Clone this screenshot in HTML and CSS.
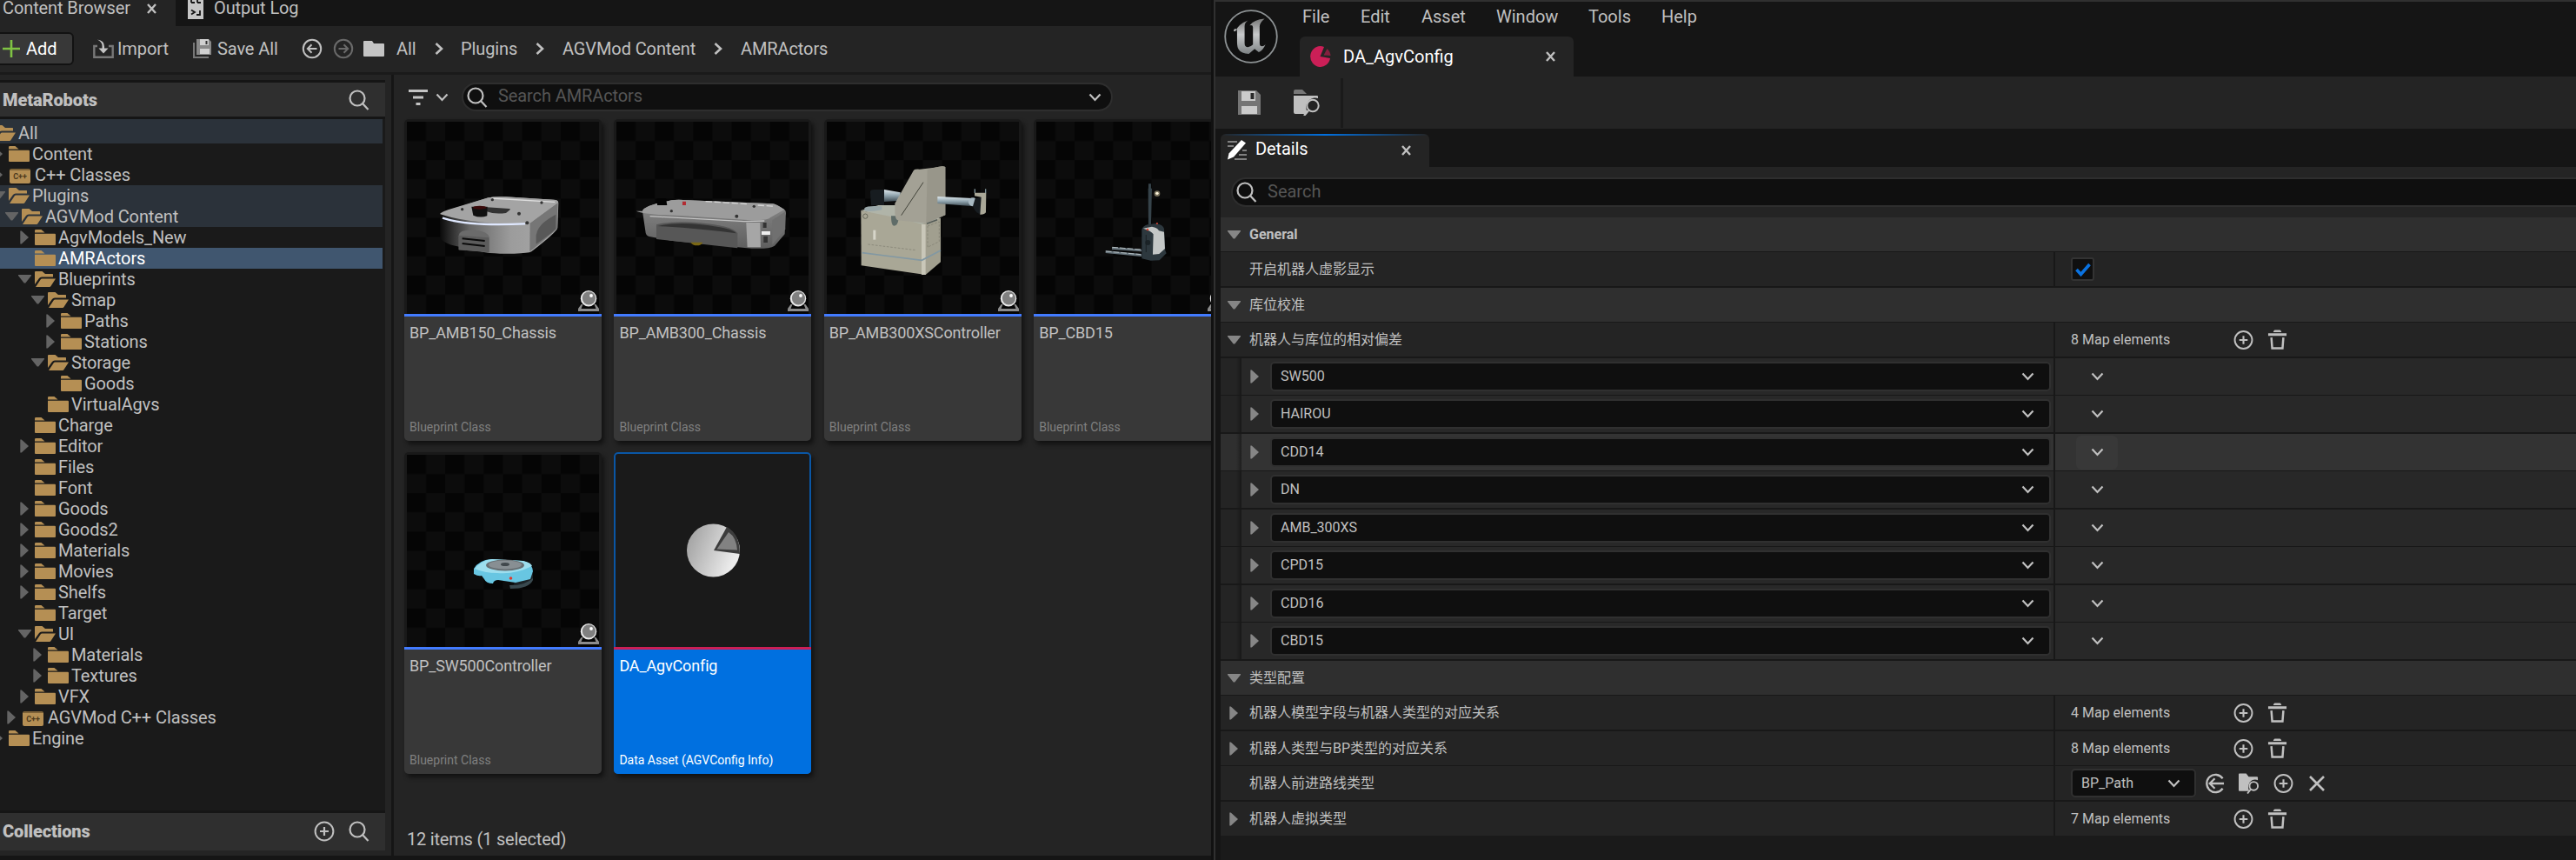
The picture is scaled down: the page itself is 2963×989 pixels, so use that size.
FILE: index.html
```html
<!DOCTYPE html>
<html lang="zh-CN">
<head>
<meta charset="utf-8">
<title>DA_AgvConfig</title>
<link rel="stylesheet" href="styles.css">
</head>
<body>
<svg class="defs" aria-hidden="true">
  <defs>
    <linearGradient id="metal" x1="0" y1="0" x2="0" y2="1"><stop offset="0" stop-color="#777"/><stop offset=".45" stop-color="#c8cacb"/><stop offset="1" stop-color="#7d8284"/></linearGradient>
    <linearGradient id="pieg" x1="0" y1="0" x2="1" y2=".4"><stop offset="0" stop-color="#9a9a9a"/><stop offset="1" stop-color="#ececec"/></linearGradient>
    <linearGradient id="r1" x1="0" y1="0" x2="1" y2="0"><stop offset="0" stop-color="#0a0a0a"/><stop offset=".25" stop-color="#666"/><stop offset=".6" stop-color="#9c9c9c"/><stop offset="1" stop-color="#a8a8a8"/></linearGradient>
    <linearGradient id="r2" x1="0" y1="0" x2="0" y2="1"><stop offset="0" stop-color="#8a8a8a"/><stop offset="1" stop-color="#5e5e5e"/></linearGradient>
    <linearGradient id="arm" x1="0" y1="0" x2="0" y2="1"><stop offset="0" stop-color="#dfe9ee"/><stop offset=".5" stop-color="#8fa3ad"/><stop offset="1" stop-color="#3d4a52"/></linearGradient>
    <pattern id="chk" width="44.2" height="44.2" patternUnits="userSpaceOnUse"><rect width="44.2" height="44.2" fill="#050505"/><path d="M22.1 0h22.1v22.1H22.1zM0 22.1h22.1v22.1H0z" fill="#0c0c0c"/></pattern>
  </defs>
  <symbol id="folder" viewBox="0 0 24 18"><path d="M0 3V1.200Q0 0 1.200 0H7.500L11.500 3.600H0z" fill="#b58f54"/><path d="M0 4.700H23Q24 4.700 24 5.700V17Q24 18 23 18H1Q0 18 0 17z" fill="#b58f54"/></symbol>
  <symbol id="open" viewBox="0 0 24 18"><path d="M0 15V1Q0 0 1 0H8.500L12 3H20.500Q21 3 21 4V6.500H8Q6 6.500 5 8z" fill="#b58f54"/><path d="M1 18L6.800 9.200Q7.300 8.500 8.200 8.500H24L18.500 17Q18 18 17 18z" fill="#b58f54"/></symbol>
  <symbol id="right" viewBox="0 0 15 16"><path d="M2.300.500h1.500L12 8 3.800 15.500H2.300z" fill="currentColor"/></symbol>
  <symbol id="down" viewBox="0 0 15 16"><path d="M0 3h15v1L8.300 12.500H6.700L0 4z" fill="currentColor"/></symbol>
  <symbol id="search" viewBox="0 0 24 24"><g fill="none" stroke="currentColor" stroke-width="2.200"><circle cx="10" cy="10" r="8.500"/><path d="M16 16L22.500 23"/></g></symbol>
  <symbol id="plus" viewBox="0 0 24 24"><g fill="none" stroke="currentColor" stroke-width="2"><circle cx="12" cy="12" r="10.400"/><path d="M12 7v10M7 12h10" stroke-width="2.200"/></g></symbol>
  <symbol id="trash" viewBox="0 0 24 24"><path d="M8 0.500Q8 0 9 0h6q1 0 1 .500L17 2.500H7zM1 4h22v3H1z" fill="currentColor"/><path d="M4.800 9l1 13h12.400l1-13" fill="none" stroke="currentColor" stroke-width="2.600"/></symbol>
  <symbol id="chev" viewBox="0 0 14 10"><path d="M1 1.500L7 8 13 1.500" fill="none" stroke="currentColor" stroke-width="2.200"/></symbol>
  <symbol id="crumb" viewBox="0 0 10 14"><path d="M1.500 1L8 7 1.500 13" fill="none" stroke="currentColor" stroke-width="2.600"/></symbol>
  <symbol id="close" viewBox="0 0 11 12"><path d="M1 1l9 10M10 1L1 11" fill="none" stroke="currentColor" stroke-width="2.400"/></symbol>
  <symbol id="back" viewBox="0 0 24 24"><g fill="none" stroke="currentColor" stroke-width="2"><circle cx="12" cy="12" r="10.200"/><path d="M17.500 12H7M11.500 7.200L6.800 12l4.700 4.800"/></g></symbol>
  <symbol id="browse" viewBox="0 0 30 30"><path d="M0 2q0-2 2-2h8l5 5H0z" fill="#777"/><path d="M0 7H27q1 0 1 1v2q-6-2-11 3-5 6-1 13l-2 2H2q-2 0-2-2z" fill="#c0c0c0"/><circle cx="22" cy="18.500" r="6.700" fill="none" stroke="#c0c0c0" stroke-width="2"/><path d="M17 24l-5 6" stroke="#c0c0c0" stroke-width="2.400"/></symbol>
  <symbol id="bp" viewBox="0 0 24 24"><path d="M3.500 16h2l-2 5h17l-2-5h2L24 21v3H0v-3z" fill="#8c8c8c"/><circle cx="12" cy="9.200" r="9.200" fill="#e8e8e8"/><circle cx="12.400" cy="8.800" r="7.600" fill="#808080"/><circle cx="15" cy="6" r="1.900" fill="#fff"/></symbol>
</svg>

<section class="browser">
  <div class="tabs">
    <div class="tab tab-on"><span>Content Browser</span><svg class="x"><use href="#close"/></svg></div>
    <div class="tab tab-log"><svg class="log" viewBox="0 0 18 22"><path d="M0 0h18v22H0z" fill="#c6c6c6"/><path d="M4 3h4M4 0v3M11 3h4M11 0v3M4 11.500l4 2.500-4 2.500M14 12v5h-4" fill="none" stroke="#151515" stroke-width="1.800"/></svg><span>Output Log</span></div>
  </div>
  <div class="bar">
    <div class="add"><svg viewBox="0 0 20 20"><path d="M10 0v20M0 10h20" stroke="#7fc343" stroke-width="2.600"/></svg><span>Add</span></div>
    <svg class="i-imp" viewBox="0 0 24 22"><path d="M5 8H1.300v12.700h21.400V8H18" fill="none" stroke="#777" stroke-width="2.400"/><path d="M5 .5q8 1 8 8v2h4.500L12 16.500 6.500 10.500H10.500V8Q10.500 3 5 .5z" fill="#c4c4c4"/></svg><span class="w-imp">Import</span>
    <svg class="i-sav" viewBox="0 0 22 22"><path d="M1 4v17h17" fill="none" stroke="#777" stroke-width="2.200"/><path d="M4 0h14l3 3v15H4z" fill="#888"/><path d="M8 0h10v7H8zM8 11h11v6H8z" fill="#d0d0d0"/><path d="M14.500 2h2v4h-2z" fill="#333"/></svg><span class="w-sav">Save All</span>
    <svg class="i-bk"><use href="#back"/></svg>
    <svg class="i-fw"><use href="#back"/></svg>
    <svg class="i-fd" viewBox="0 0 24 18"><path d="M0 1q0-1 1-1h9l2 3h11q1 0 1 1v13q0 1-1 1H1q-1 0-1-1z" fill="#c4c4c4"/></svg>
    <span class="w-all">All</span><svg class="cr"><use href="#crumb"/></svg>
    <span class="w-plg">Plugins</span><svg class="cr"><use href="#crumb"/></svg>
    <span class="w-mod">AGVMod Content</span><svg class="cr"><use href="#crumb"/></svg>
    <span class="w-amr">AMRActors</span>
  </div>
  <div class="body">
    <aside class="side">
      <div class="hd"><b>MetaRobots</b><svg class="s22"><use href="#search"/></svg></div>
      <div class="tree">
        <div class="n n-all hi"><svg class="tw"></svg><svg class="fi"><use href="#open"/></svg><span>All</span></div>
        <div class="n l0"><svg class="tw"><use href="#right"/></svg><svg class="fi"><use href="#folder"/></svg><span>Content</span></div>
        <div class="n l0"><svg class="tw"><use href="#right"/></svg><i class="cpp">C++</i><span>C++ Classes</span></div>
        <div class="n l0 hi"><svg class="tw"><use href="#down"/></svg><svg class="fi"><use href="#open"/></svg><span>Plugins</span></div>
        <div class="n l1 hi"><svg class="tw"><use href="#down"/></svg><svg class="fi"><use href="#open"/></svg><span>AGVMod Content</span></div>
        <div class="n l2"><svg class="tw"><use href="#right"/></svg><svg class="fi"><use href="#folder"/></svg><span>AgvModels_New</span></div>
        <div class="n l2 sel"><svg class="tw"></svg><svg class="fi"><use href="#folder"/></svg><span>AMRActors</span></div>
        <div class="n l2"><svg class="tw"><use href="#down"/></svg><svg class="fi"><use href="#open"/></svg><span>Blueprints</span></div>
        <div class="n l3"><svg class="tw"><use href="#down"/></svg><svg class="fi"><use href="#open"/></svg><span>Smap</span></div>
        <div class="n l4"><svg class="tw"><use href="#right"/></svg><svg class="fi"><use href="#folder"/></svg><span>Paths</span></div>
        <div class="n l4"><svg class="tw"><use href="#right"/></svg><svg class="fi"><use href="#folder"/></svg><span>Stations</span></div>
        <div class="n l3"><svg class="tw"><use href="#down"/></svg><svg class="fi"><use href="#open"/></svg><span>Storage</span></div>
        <div class="n l4"><svg class="tw"></svg><svg class="fi"><use href="#folder"/></svg><span>Goods</span></div>
        <div class="n l3"><svg class="tw"></svg><svg class="fi"><use href="#folder"/></svg><span>VirtualAgvs</span></div>
        <div class="n l2"><svg class="tw"></svg><svg class="fi"><use href="#folder"/></svg><span>Charge</span></div>
        <div class="n l2"><svg class="tw"><use href="#right"/></svg><svg class="fi"><use href="#folder"/></svg><span>Editor</span></div>
        <div class="n l2"><svg class="tw"></svg><svg class="fi"><use href="#folder"/></svg><span>Files</span></div>
        <div class="n l2"><svg class="tw"></svg><svg class="fi"><use href="#folder"/></svg><span>Font</span></div>
        <div class="n l2"><svg class="tw"><use href="#right"/></svg><svg class="fi"><use href="#folder"/></svg><span>Goods</span></div>
        <div class="n l2"><svg class="tw"><use href="#right"/></svg><svg class="fi"><use href="#folder"/></svg><span>Goods2</span></div>
        <div class="n l2"><svg class="tw"><use href="#right"/></svg><svg class="fi"><use href="#folder"/></svg><span>Materials</span></div>
        <div class="n l2"><svg class="tw"><use href="#right"/></svg><svg class="fi"><use href="#folder"/></svg><span>Movies</span></div>
        <div class="n l2"><svg class="tw"><use href="#right"/></svg><svg class="fi"><use href="#folder"/></svg><span>Shelfs</span></div>
        <div class="n l2"><svg class="tw"></svg><svg class="fi"><use href="#folder"/></svg><span>Target</span></div>
        <div class="n l2"><svg class="tw"><use href="#down"/></svg><svg class="fi"><use href="#open"/></svg><span>UI</span></div>
        <div class="n l3"><svg class="tw"><use href="#right"/></svg><svg class="fi"><use href="#folder"/></svg><span>Materials</span></div>
        <div class="n l3"><svg class="tw"><use href="#right"/></svg><svg class="fi"><use href="#folder"/></svg><span>Textures</span></div>
        <div class="n l2"><svg class="tw"><use href="#right"/></svg><svg class="fi"><use href="#folder"/></svg><span>VFX</span></div>
        <div class="n l1"><svg class="tw"><use href="#right"/></svg><i class="cpp">C++</i><span>AGVMod C++ Classes</span></div>
        <div class="n l0"><svg class="tw"><use href="#right"/></svg><svg class="fi"><use href="#folder"/></svg><span>Engine</span></div>
      </div>
      <div class="hd hd-col"><b>Collections</b><svg class="s22 pl"><use href="#plus"/></svg><svg class="s22"><use href="#search"/></svg></div>
    </aside>
    <main class="main">
      <div class="find">
        <svg class="filt" viewBox="0 0 22 18"><path d="M0 1.500h22M5 9h12M8.500 16.500h5" stroke="#c4c4c4" stroke-width="3"/></svg>
        <svg class="chev"><use href="#chev"/></svg>
        <div class="box"><svg class="s22"><use href="#search"/></svg><span>Search AMRActors</span><svg class="chev"><use href="#chev"/></svg></div>
      </div>
      <div class="grid">
        <article class="card">
          <svg class="thumb" viewBox="0 0 221 221"><rect width="221" height="221" fill="url(#chk)"/>
            <g transform="translate(-3 60) scale(.3333)">
              <path d="M123 142q5-9 30-17L290 82q20-5 60-3l165 10q18 1 17 12l-3 85q-2 14-90 82-10 6-60 7-60 2-100-4l-110-24q-25-5-45-25z" fill="url(#r1)"/>
              <path d="M434 170L530 100l-2 88q-20 20-95 80z" fill="#767676"/>
              <path d="M455 212q5-40 68-72v50q-20 20-68 52z" fill="#585858"/>
              <path d="M123 138q5-7 30-15L290 82q20-5 60-3l165 10q18 1 15 8L440 165q-12 9-60 8-170-4-257-35z" fill="#a4a4a4"/>
              <path d="M300 84l220 13" stroke="#ddd" stroke-width="4"/>
              <path d="M132 152q90 30 285 20" fill="none" stroke="#dfe8ff" stroke-width="7"/>
              <path d="M285 115l78 5q6 0 0 5l-12 10q-40 5-66-5z" fill="#333"/>
              <path d="M232 113h55l-1 32q-25 8-48-2z" fill="#111"/><ellipse cx="260" cy="116" rx="24" ry="6" fill="#3a0a0a"/>
              <path d="M188 262v-50q2-20 50-18 55 2 56 30v47z" fill="#6b6b6b"/><path d="M188 262v-50l104 8v50z" fill="#5c5c5c"/>
              <path d="M200 223l78 8M200 240l78 9" stroke="#0b0b0b" stroke-width="6"/>
              <g fill="#333"><circle cx="304" cy="89" r="5"/><circle cx="474" cy="99" r="5"/><circle cx="200" cy="122" r="5"/><circle cx="396" cy="137" r="6"/><circle cx="424" cy="169" r="6"/></g>
            </g>
            <use href="#bp" x="197" y="194" width="24" height="24"/></svg>
          <div class="info"><span class="name">BP_AMB150_Chassis</span><span class="kind">Blueprint Class</span></div>
        </article>
        <article class="card">
          <svg class="thumb" viewBox="0 0 221 221"><rect width="221" height="221" fill="url(#chk)"/>
            <g transform="translate(-244 60) scale(.3333)">
              <path d="M822 128q5-15 60-28l40-9q20-4 60 0l290 12q10 1 40 20 7 5 4 20l-3 65-35 40q-20 12-80 9L920 230l-75-14q-12-2-13-20z" fill="url(#r2)"/>
              <path d="M822 128q5-15 60-28l40-9q20-4 60 0l290 12q10 1 40 20l-48 27q-10 12-80 9l-230-15q-120-3-154-16z" fill="#9c9c9c"/>
              <path d="M848 146l325 18 70-2" fill="none" stroke="#c4c4c4" stroke-width="4"/>
              <path d="M870 225v-50q60-15 150-6 110 10 130 35v52z" fill="#575757"/>
              <path d="M875 180q60-15 150-5 110 12 120 30-120-16-270-25z" fill="#343434"/>
              <path d="M1180 168h48l2 85h-46z" fill="#a6a6a6"/><path d="M1270 160l45-30v60l-45 55z" fill="#707070"/>
              <path d="M1233 198h30v12h-30z" fill="#eee"/><path d="M1238 168h12v18h-12zM1240 215h14v22h-14z" fill="#333"/>
              <path d="M988 236h42q-5 11-20 11t-22-11z" fill="#7a6714"/>
              <path d="M873 84h30l4 24h-34z" fill="#030303"/><path d="M960 95h12v13h-12z" fill="#b32b32"/>
              <path d="M1040 95l150 9M1220 108l60 4" stroke="#d5d5d5" stroke-width="4" stroke-dasharray="22 8"/>
              <g fill="#333"><circle cx="922" cy="128" r="5"/><circle cx="1147" cy="146" r="6"/><circle cx="1207" cy="112" r="5"/></g>
            </g>
            <use href="#bp" x="197" y="194" width="24" height="24"/></svg>
          <div class="info"><span class="name">BP_AMB300_Chassis</span><span class="kind">Blueprint Class</span></div>
        </article>
        <article class="card">
          <svg class="thumb" viewBox="0 0 221 221"><rect width="221" height="221" fill="url(#chk)"/>
            <g transform="translate(-6 30) scale(.3333)">
              <path d="M168 152q0-8 12-8h36v55h-45z" fill="#171c20"/><path d="M216 144l56 10v28l-56 4z" fill="url(#arm)"/>
              <path d="M136 216l60-18h60l155 45-65 30z" fill="#b0b4a8"/><path d="M148 208q10-10 60-6v12q-40 8-60 3z" fill="#9aa8aa"/>
              <path d="M136 216l120 25 90 22 13 175-222-32z" fill="#a9a796"/><path d="M345 264l66-22v152l-52 44h-14z" fill="#a19f8f"/>
              <path d="M345 264h14v174h-14z" fill="#c9c7b9"/>
              <path d="M140 362l206 26 65-34" fill="none" stroke="#8298a3" stroke-width="5"/>
              <path d="M240 235h26q0 34-16 34-10 0-10-34z" fill="#5f6c68"/>
              <path d="M318 77q4-4 20-3l52-6q30-8 37-2v166l-66 28-98-10q-8-2-10-24v-34z" fill="#a3a195"/>
              <path d="M365 76l25-8q30-8 37-2v166l-66 28z" fill="#98968a"/>
              <path d="M351 119l-76 114" stroke="#414239" stroke-width="3"/>
              <path d="M363 262l36-14" stroke="#555c58" stroke-width="5"/>
              <path d="M400 168l120 6 15 10-10 18-125-10z" fill="url(#arm)"/>
              <circle cx="522" cy="187" r="15" fill="#a9bac3"/><path d="M530 175l22-5-2 58q-18 0-28-26z" fill="#171c20"/>
              <path d="M528 155h40l-1 68q-5 8-20 7l4-60-23-4z" fill="#aaa898"/><path d="M529 142v14M566 142v14" stroke="#7f9298" stroke-width="4"/>
              <path d="M178 284h9v33h-9z" fill="#d6d5c9"/><circle cx="151" cy="236" r="8" fill="none" stroke="#666759" stroke-width="3"/><path d="M160 333l165 20M366 270l40-15v68l-40 20z" fill="none" stroke="#7d7c6e" stroke-width="2" stroke-dasharray="8 5"/>
            </g>
            <use href="#bp" x="197" y="194" width="24" height="24"/></svg>
          <div class="info"><span class="name">BP_AMB300XSController</span><span class="kind">Blueprint Class</span></div>
        </article>
        <article class="card">
          <svg class="thumb" viewBox="0 0 221 221"><rect width="221" height="221" fill="url(#chk)"/>
            <g transform="translate(-247 30) scale(.3333)">
              <path d="M1127 140h13l-3 125h-9zM1128 124h9v16h-9z" fill="#36434a"/><circle cx="1158" cy="158" r="10" fill="#77705c"/><circle cx="1158" cy="157" r="5" fill="#fff6dc"/>
              <path d="M1002 342l102 8v8l-102-7zM980 354l124 12v9l-124-12z" fill="#65727a"/>
              <path d="M1003 343l100 8M981 357l120 11" stroke="#b4bec2" stroke-width="3" stroke-dasharray="20 6"/>
              <path d="M1105 283q2-12 20-18l30-4q24 4 27 18l4 75 4 10-24 24-30 1-31-7z" fill="#2d383e"/>
              <path d="M1110 278l30-6q20 4 24 14l18 4 3 58-20 18-22 2 2-70q-8-12-35-20z" fill="#c4c7c6"/>
              <circle cx="1125" cy="282" r="4" fill="#dc4433"/><circle cx="1158" cy="261" r="3" fill="#dc4433"/><circle cx="1126" cy="327" r="9" fill="#1b2327"/><path d="M1120 300v60" stroke="#1a2226" stroke-width="3"/>
            </g>
            <use href="#bp" x="197" y="194" width="24" height="24"/></svg>
          <div class="info"><span class="name">BP_CBD15</span><span class="kind">Blueprint Class</span></div>
        </article>
        <article class="card">
          <svg class="thumb" viewBox="0 0 221 221"><rect width="221" height="221" fill="url(#chk)"/>
            <path d="M118 150q22 0 27-14v8q-4 10-26 10z" fill="#39494f"/><path d="M124 143l21-7v6q-8 7-22 8z" fill="#1c2428"/>
            <path d="M77 131q6-10 20-11l36 2q11 2 12 12l-3 9-17 4-20-3q-5 0-6 4-8 0-10-5l-3-4q-4 1-9-2z" fill="#68c6e2"/>
            <path d="M78 131q8-10 20-11l36 2q9 2 10 6-20 10-40 8-15 0-26-5z" fill="#9ddeee"/>
            <ellipse cx="113" cy="127" rx="22" ry="6.500" fill="#687074"/><ellipse cx="113" cy="126.500" rx="19" ry="5" fill="#888f93"/><ellipse cx="113" cy="126" rx="5" ry="2" fill="#41484c"/>
            <circle cx="119.500" cy="142" r="1.800" fill="#e03a2e"/>
            <use href="#bp" x="197" y="194" width="24" height="24"/></svg>
          <div class="info"><span class="name">BP_SW500Controller</span><span class="kind">Blueprint Class</span></div>
        </article>
        <article class="card card-on">
          <svg class="thumb" viewBox="0 0 221 221"><circle cx="111.500" cy="110" r="30.500" fill="url(#pieg)"/><path d="M112 110L127 83q15 8 15 31z" fill="#3c3c3c"/><path d="M115.500 108.500L129 89q9 6 10 20.500z" fill="#828282"/></svg>
          <div class="info"><span class="name">DA_AgvConfig</span><span class="kind">Data Asset (AGVConfig Info)</span></div>
        </article>
      </div>
      <div class="status">12 items (1 selected)</div>
    </main>
  </div>
</section>

<section class="editor">
  <header class="top">
    <svg class="logo" viewBox="0 0 62 62"><circle cx="31" cy="31" r="29.800" fill="#101010" stroke="#8d9294" stroke-width="1.800"/><path d="M12 25q4-9 15-13-4 3-4 7v20q0 5 4 5 3 0 6-3V20q0-3-4-2 5-7 18-8-6 5-6 9v20q0 4 3 4 2 0 4-2-3 7-8 9l-5-4-7 6q-9 0-12-5-2-3-2-9V26q0-4-2-4t-2 3z" transform="translate(1.500 1) scale(.96)" fill="url(#metal)"/></svg>
    <div class="topc">
      <nav class="menu"><span>File</span><span>Edit</span><span>Asset</span><span>Window</span><span>Tools</span><span>Help</span></nav>
      <div class="doc"><svg class="pie" viewBox="0 0 24 24"><path d="M11.500 12L16 1Q14 0 11.500 0A11.500 12 0 1 0 23 14z" fill="#cb1f57"/><path d="M15.500 10.500L19.500 3Q23 6 23.500 11z" fill="#84203f"/></svg><span>DA_AgvConfig</span><svg class="x"><use href="#close"/></svg></div>
    </div>
  </header>
  <div class="tools">
    <svg class="save" viewBox="0 0 26 28"><path d="M0 0h21l5 5v23H0z" fill="#757575"/><path d="M4 1h16v11H4zM4 18h18v9H4z" fill="#cbcbcb"/><path d="M14.500 3h4v7h-4z" fill="#2a2a2a"/></svg>
    <svg class="brw"><use href="#browse"/></svg>
  </div>
  <div class="panel">
    <div class="dtabs"><div class="dtab"><svg class="pen" viewBox="0 0 23 23"><path d="M1 2h11M1 7h7M18 12h5M14 17h9M9 22h14" stroke="#808080" stroke-width="1.800"/><path d="M17 0l5 3.500L8 19.500l-7 3 1.500-7z" fill="#fff"/></svg><span>Details</span><svg class="x"><use href="#close"/></svg></div></div>
    <div class="dfind"><div class="box"><svg class="s22"><use href="#search"/></svg><span>Search</span></div></div>
    <div class="rows">
      <div class="r cat"><svg class="ar"><use href="#down"/></svg><b>General</b></div>
      <div class="r two"><div class="k"><svg class="ar"></svg><span>开启机器人虚影显示</span></div><div class="v"><div class="chk"><svg viewBox="0 0 18 16"><path d="M1.500 8l5 5.500L16.500 2" fill="none" stroke="#0a72e0" stroke-width="3.600"/></svg></div></div></div>
      <div class="r cat"><svg class="ar"><use href="#down"/></svg><span>库位校准</span></div>
      <div class="r two"><div class="k"><svg class="ar"><use href="#down"/></svg><span>机器人与库位的相对偏差</span></div><div class="v"><span class="cnt">8 Map elements</span><svg class="ic"><use href="#plus"/></svg><svg class="ic"><use href="#trash"/></svg></div></div>
      <div class="r item"><div class="k"><svg class="ar"><use href="#right"/></svg><div class="inp"><span>SW500</span><svg class="chev"><use href="#chev"/></svg></div></div><div class="v"><div class="btn"><svg class="chev"><use href="#chev"/></svg></div></div></div>
      <div class="r item two"><div class="k"><svg class="ar"><use href="#right"/></svg><div class="inp"><span>HAIROU</span><svg class="chev"><use href="#chev"/></svg></div></div><div class="v"><div class="btn"><svg class="chev"><use href="#chev"/></svg></div></div></div>
      <div class="r item hov"><div class="k"><svg class="ar"><use href="#right"/></svg><div class="inp"><span>CDD14</span><svg class="chev"><use href="#chev"/></svg></div></div><div class="v"><div class="btn"><svg class="chev"><use href="#chev"/></svg></div></div></div>
      <div class="r item two"><div class="k"><svg class="ar"><use href="#right"/></svg><div class="inp"><span>DN</span><svg class="chev"><use href="#chev"/></svg></div></div><div class="v"><div class="btn"><svg class="chev"><use href="#chev"/></svg></div></div></div>
      <div class="r item"><div class="k"><svg class="ar"><use href="#right"/></svg><div class="inp"><span>AMB_300XS</span><svg class="chev"><use href="#chev"/></svg></div></div><div class="v"><div class="btn"><svg class="chev"><use href="#chev"/></svg></div></div></div>
      <div class="r item two"><div class="k"><svg class="ar"><use href="#right"/></svg><div class="inp"><span>CPD15</span><svg class="chev"><use href="#chev"/></svg></div></div><div class="v"><div class="btn"><svg class="chev"><use href="#chev"/></svg></div></div></div>
      <div class="r item"><div class="k"><svg class="ar"><use href="#right"/></svg><div class="inp"><span>CDD16</span><svg class="chev"><use href="#chev"/></svg></div></div><div class="v"><div class="btn"><svg class="chev"><use href="#chev"/></svg></div></div></div>
      <div class="r item two"><div class="k"><svg class="ar"><use href="#right"/></svg><div class="inp"><span>CBD15</span><svg class="chev"><use href="#chev"/></svg></div></div><div class="v"><div class="btn"><svg class="chev"><use href="#chev"/></svg></div></div></div>
      <div class="r cat"><svg class="ar"><use href="#down"/></svg><span>类型配置</span></div>
      <div class="r two"><div class="k"><svg class="ar"><use href="#right"/></svg><span>机器人模型字段与机器人类型的对应关系</span></div><div class="v"><span class="cnt">4 Map elements</span><svg class="ic"><use href="#plus"/></svg><svg class="ic"><use href="#trash"/></svg></div></div>
      <div class="r"><div class="k"><svg class="ar"><use href="#right"/></svg><span>机器人类型与BP类型的对应关系</span></div><div class="v"><span class="cnt">8 Map elements</span><svg class="ic"><use href="#plus"/></svg><svg class="ic"><use href="#trash"/></svg></div></div>
      <div class="r two"><div class="k"><svg class="ar"></svg><span>机器人前进路线类型</span></div><div class="v"><div class="combo"><span>BP_Path</span><svg class="chev"><use href="#chev"/></svg></div><svg class="ic use" viewBox="0 0 24 24"><path d="M21.500 6A10.500 10.500 0 1 0 21.500 18M23 12H6M12 6L6 12l6 6" fill="none" stroke="#c0c0c0" stroke-width="2.400"/></svg><svg class="ic ic-b" viewBox="0 0 24 24"><path d="M0 1q0-1 1-1h8l3 4h10q1 0 1 1v3q-6-2-10 3-3 6 0 10H1q-1 0-1-1z" fill="#c0c0c0"/><circle cx="18" cy="15" r="5" fill="none" stroke="#c0c0c0" stroke-width="2"/><path d="M14.500 19L10.500 24" stroke="#c0c0c0" stroke-width="2"/></svg><svg class="ic ic-p"><use href="#plus"/></svg><svg class="ic ic-x" viewBox="0 0 18 18"><path d="M1 1l16 16M17 1L1 17" stroke="#c0c0c0" stroke-width="2.600"/></svg></div></div>
      <div class="r last"><div class="k"><svg class="ar"><use href="#right"/></svg><span>机器人虚拟类型</span></div><div class="v"><span class="cnt">7 Map elements</span><svg class="ic"><use href="#plus"/></svg><svg class="ic"><use href="#trash"/></svg></div></div>
    </div>
  </div>
</section>
</body>
</html>
```
FILE: styles.css
```css
* { box-sizing: border-box; }
body {
  margin: 0; width: 2963px; height: 989px; overflow: hidden; display: flex;
  background: #151515; color: #c0c0c0;
  font: 20px/24px Roboto, "Noto Sans CJK SC", sans-serif; white-space: nowrap;
  letter-spacing: -.1px;
}
svg { flex: none; display: block; color: #c0c0c0; }
.defs { position: absolute; width: 0; height: 0; }
.chev { width: 15px; height: 10px; }
.x { width: 11px; height: 12px; }
.s22 { width: 24px; height: 24px; }

/* content browser window */
.browser { width: 1396px; flex: none; border-right: 3px solid #111; display: flex; flex-direction: column; padding-bottom: 5px; overflow: hidden; }
.tabs { height: 30px; flex: none; display: flex; }
.tab { height: 30px; display: flex; align-items: flex-start; line-height: 19px; }
.tab-on { width: 202px; background: #242424; padding: 0 22px 0 3px; justify-content: space-between; }
.tab-on .x { margin-top: 4px; }
.tab-log { padding-left: 14px; }
.tab-log .log { width: 18px; height: 22px; margin-right: 12px; }
.bar { height: 56px; flex: none; background: #242424; border-bottom: 3px solid #1a1a1a; display: flex; align-items: center; padding-bottom: 1px; }
.bar > span, .bar > svg { flex: none; }
.add { width: 86px; height: 38px; margin-left: -1px; background: #383838; border: 2px solid #121212; border-left: 0; border-radius: 0 6px 6px 0; display: flex; align-items: center; padding-left: 4px; color: #fff; }
.add svg { width: 20px; height: 20px; margin-right: 7px; }
.i-imp { width: 24px; height: 22px; margin-left: 22px; margin-right: 4px; }
.w-imp { width: 87px; }
.i-sav { width: 22px; height: 22px; margin-right: 6px; }
.w-sav { width: 97px; }
.i-bk { width: 24px; height: 24px; margin-right: 12px; }
.i-fw { width: 24px; height: 24px; color: #6a6a6a; transform: scaleX(-1); margin-right: 11px; }
.i-fd { width: 24px; height: 18px; margin-right: 14px; }
.cr { width: 10px; height: 14px; }
.w-all { width: 44px; }
.w-plg { width: 86px; margin-left: 20px; }
.w-mod { width: 174px; margin-left: 21px; }
.w-amr { margin-left: 21px; }
.body { flex: 1; display: flex; min-height: 0; background: #242424; }
.side { width: 453px; flex: none; border-right: 3px solid #151515; padding: 6px 7px 6px 0; display: flex; flex-direction: column; overflow: hidden; }
.hd { height: 42px; flex: none; background: #2f2f2f; border-top: 3px solid #151515; display: flex; align-items: center; padding: 0 18px 0 3px; font-weight: 700; }
.hd b { flex: 1; }
.hd-col { height: 46px; padding-bottom: 2px; }
.hd-col .pl { margin-right: 16px; }
.tree { flex: 1; background: #1a1a1a; border-top: 3px solid #151515; padding-right: 3px; overflow: hidden; }
.n { height: 24px; display: flex; align-items: center; }
.n.hi { background: #2b323a; }
.n.sel { background: #40566f; color: #fff; }
.n-all { height: 28px; padding-top: 4px; }
.tw { width: 15px; height: 16px; margin-right: 4px; color: #646464; }
.fi { width: 24px; height: 18px; margin-right: 3px; }
.n-all .tw { margin-left: -25px; }
.l0 .tw { margin-left: -9px; }
.l1 .tw { margin-left: 6px; }
.l2 .tw { margin-left: 21px; }
.l3 .tw { margin-left: 36px; }
.l4 .tw { margin-left: 51px; }
.cpp { width: 24px; height: 17px; margin: 2px 5px 0 1px; background: #b58f54; border-top: 2px solid #7d6238; border-radius: 2px; font: 700 9px/15px Roboto, sans-serif; text-align: center; color: #4d3a1c; }

.main { flex: 1; min-width: 0; padding: 9px 0 0 12px; display: flex; flex-direction: column; overflow: hidden; }
.find { display: flex; align-items: center; height: 33px; padding-left: 5px; }
.filt { width: 22px; height: 18px; margin-right: 9px; }
.box { display: flex; align-items: center; background: #0f0f0f; border: 2px solid #2e2e2e; color: #555; }
.find .box { width: 749px; height: 33px; border-radius: 17px; margin-left: 15px; padding: 0 11px 0 4px; }
.box .s22 { margin-right: 12px; }
.box span { flex: 1; margin-top: -3px; }
.grid { display: grid; grid-template-columns: repeat(4, 227px); gap: 13px 14.4px; margin-top: 9px; }
.card { height: 370px; background: #383838; border-radius: 5px; box-shadow: 3px 4px 5px #121212; display: flex; flex-direction: column; padding: 3px 0 0; background-image: linear-gradient(#191919 224px, transparent 224px); overflow: hidden; }
.thumb { width: 221px; height: 221px; margin-left: 3px; }
.info { flex: 1; border-top: 3px solid #427bff; display: flex; flex-direction: column; justify-content: space-between; padding: 7px 6px 7px; }
.name { font-size: 18px; line-height: 24px; letter-spacing: -.15px; }
.kind { font-size: 14px; line-height: 18px; color: #808080; letter-spacing: 0; }
.card-on { background: linear-gradient(#1a1a1a 224px, #0070e0 224px); box-shadow: inset 0 0 0 2px #0a56a5, 3px 4px 5px #121212; color: #fff; }
.card-on .info { border-top-color: #cb1f57; background: #0070e0; }
.card-on .kind { color: #fff; }
.status { margin: auto 0 7px 3px; letter-spacing: -.2px; }

/* asset editor window */
.editor { flex: 1; min-width: 0; border-left: 2px solid #303030; border-top: 2px solid #303030; display: flex; flex-direction: column; letter-spacing: 0; }
.top { height: 86px; flex: none; display: flex; }
.logo { width: 62px; height: 62px; margin: 9px 25px 0 10px; }
.topc { flex: 1; display: flex; flex-direction: column; justify-content: space-between; }
.menu { display: flex; padding: 5px 0 0 3px; }
.menu span:nth-child(1) { width: 67px; }
.menu span:nth-child(2) { width: 70px; }
.menu span:nth-child(3) { width: 86px; }
.menu span:nth-child(4) { width: 106px; }
.menu span:nth-child(5) { width: 84px; }
.doc { width: 315px; height: 46px; background: #242424; border-radius: 6px 6px 0 0; display: flex; align-items: center; padding: 0 21px 0 12px; color: #fff; }
.doc span { flex: 1; }
.pie { width: 24px; height: 24px; margin-right: 14px; }
.tools { height: 60px; flex: none; background: #242424; display: flex; align-items: center; padding-left: 26px; background-image: linear-gradient(#1a1a1a, #1a1a1a); background-size: 3px 57px; background-position: 144px 2px; background-repeat: no-repeat; }
.save { width: 26px; height: 28px; margin-right: 38px; }
.brw { width: 30px; height: 30px; }
.panel { flex: 1; margin-left: 6px; display: flex; flex-direction: column; background: #1a1a1a; }
.dtabs { height: 44px; flex: none; background: #151515; padding-top: 6px; }
.dtab { width: 240px; height: 38px; background: #242424; border-radius: 6px 6px 0 0; display: flex; align-items: center; padding: 0 21px 4px 7px; color: #fff; background-image: linear-gradient(90deg, transparent, #0070e0 50%, transparent); background-size: 100% 2px; background-repeat: no-repeat; letter-spacing: -.1px; }
.dtab span { flex: 1; }
.pen { width: 23px; height: 23px; margin: 3px 10px 0 0; }
.dtab .x { margin-top: 3px; }
.dfind { height: 58px; flex: none; background: #242424; padding: 12px 0 0 12px; }
.dfind .box { height: 34px; border-radius: 17px 0 0 17px; border-right: 0; padding-left: 4px; }
.r { height: 40px; border-bottom: 1px solid #181818; background: #242424; display: flex; align-items: center; font-size: 16px; }
.r.two { height: 41px; border-bottom-width: 2px; }
.r.last { height: 39px; border-bottom: 0; }
.r.cat { background: #2f2f2f; padding-left: 8px; }
.cat b { font-size: 16px; }
.ar { width: 15px; height: 16px; margin-right: 10px; color: #868686; }
.k { width: 960px; flex: none; align-self: stretch; display: flex; align-items: center; border-right: 2px solid #181818; padding-left: 8px; }
.v { flex: 1; align-self: stretch; display: flex; align-items: center; padding-left: 18px; }
.cnt { width: 187px; font-size: 16px; }
.ic { width: 23px; height: 24px; margin-right: 16px; }
.chk { width: 27px; height: 27px; background: #0f0f0f; border: 2px solid #333; border-radius: 3px; display: grid; place-items: center; }
.chk svg { width: 18px; height: 16px; }
.item { height: 43px; background: linear-gradient(90deg, #242424 18px, #181818 24px, #282828 24px); }
.item.two { height: 44px; }
.item.hov { background: linear-gradient(90deg, #2f2f2f 18px, #1e1e1e 24px, #333 24px); height: 43px; }
.item .k { padding: 0 3px 0 32px; }
.item .ar { margin-right: 10px; }
.inp, .combo { background: #0f0f0f; border: 2px solid #303030; border-radius: 5px; display: flex; align-items: center; justify-content: space-between; }
.inp { flex: 1; height: 34px; padding: 0 17px 0 10px; }
.btn { width: 48px; height: 39px; margin-left: 6px; border-radius: 6px; display: grid; place-items: center; }
.hov .btn { background: #383838; }
.combo { width: 144px; height: 33px; padding: 0 16px 0 10px; margin-right: 10px; }
.use { margin-right: 16px; }
.ic-b { margin-right: 17px; }
.ic-p { margin-right: 18px; }
.ic-x { width: 18px; height: 18px; }
```
